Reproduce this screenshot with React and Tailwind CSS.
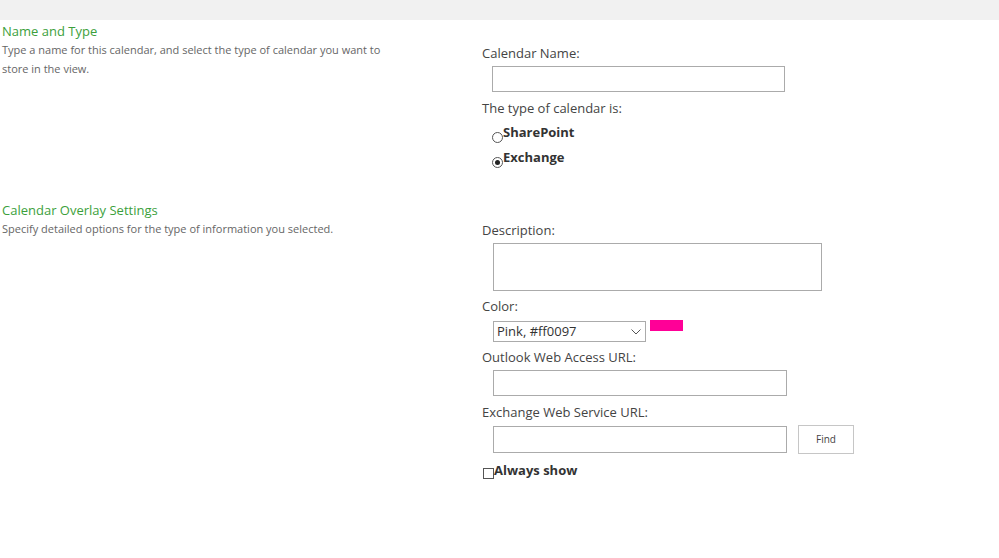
import React from "react";

const font = { fontFamily: '"Open Sans", "Noto Sans", sans-serif' };

function Label({ children, className = "" }) {
  return (
    <div className={"h-[20px] leading-[20px] text-[13px] text-[#444444] " + className}>
      {children}
    </div>
  );
}

function Input({ className = "" }) {
  return <div className={"border border-[#ababab] bg-white " + className} />;
}

function Radio({ checked, label, className = "" }) {
  return (
    <div className={"flex items-end h-[20px] " + className}>
      <span className="relative w-[11px] h-[11px] rounded-full border border-[#555] bg-white mb-[-1px] ml-[10px]">
        {checked && (
          <span className="absolute left-[2px] top-[2px] w-[5px] h-[5px] rounded-full bg-[#222]" />
        )}
      </span>
      <span className="text-[13px] font-bold text-[#333] leading-[20px]">{label}</span>
    </div>
  );
}

export default function App() {
  return (
    <div className="w-[999px] h-[558px] bg-white overflow-hidden" style={font}>
      <div className="h-[20px] bg-[#f1f1f1]" />

      {/* Section 1 */}
      <div className="flex h-[180px]">
        <div className="w-[482px] pl-[2px] pt-[1px]">
          <div className="h-[20px] leading-[20px] text-[13px] text-[#3c9f3c]">Name and Type</div>
          <div className="text-[11px] leading-[19px] text-[#666666] w-[390px] -mt-[1px]">
            Type a name for this calendar, and select the type of calendar you want to store in the view.
          </div>
        </div>
        <div className="flex-1 pt-[23px]">
          <Label>Calendar Name:</Label>
          <Input className="ml-[10px] mt-[3px] w-[293px] h-[26px]" />
          <Label className="mt-[6px]">The type of calendar is:</Label>
          <Radio className="mt-[4px]" label="SharePoint" />
          <Radio className="mt-[5px]" checked label="Exchange" />
        </div>
      </div>

      {/* Section 2 */}
      <div className="flex">
        <div className="w-[482px] pl-[2px]">
          <div className="h-[20px] leading-[20px] text-[13px] text-[#3c9f3c]">Calendar Overlay Settings</div>
          <div className="text-[11px] leading-[18px] text-[#666666]">
            Specify detailed options for the type of information you selected.
          </div>
        </div>
        <div className="flex-1 pt-[20px]">
          <Label>Description:</Label>
          <Input className="ml-[11px] mt-[3px] w-[329px] h-[48px]" />
          <Label className="mt-[5px]">Color:</Label>
          <div className="flex items-start mt-[5px]">
            <div className="ml-[11px] w-[153px] h-[21px] border border-[#ababab] flex items-center justify-between pl-[3px] pr-[4px]">
              <span className="text-[13px] text-[#333] leading-[19px]">Pink, #ff0097</span>
              <svg width="10" height="6" viewBox="0 0 10 6" className="mt-[1px]">
                <path d="M0.5 0.5 L5 5 L9.5 0.5" fill="none" stroke="#555" strokeWidth="1" />
              </svg>
            </div>
            <div className="ml-[4px] mt-[-1px] w-[33px] h-[11px] bg-[#ff0097]" />
          </div>
          <Label className="mt-[5px]">Outlook Web Access URL:</Label>
          <Input className="ml-[11px] mt-[3px] w-[294px] h-[26px]" />
          <Label className="mt-[6px]">Exchange Web Service URL:</Label>
          <div className="flex items-start mt-[3px]">
            <Input className="ml-[11px] mt-[1px] w-[294px] h-[27px]" />
            <div className="ml-[11px] w-[56px] h-[29px] border border-[#c6c6c6] bg-white flex items-center justify-center text-[10px] text-[#444]">
              Find
            </div>
          </div>
          <div className="flex items-end h-[20px] mt-[6px]">
            <span className="w-[11px] h-[11px] border border-[#555] bg-white mb-[1px] ml-[1px]" />
            <span className="text-[13px] font-bold text-[#333] leading-[20px]">Always show</span>
          </div>
        </div>
      </div>
    </div>
  );
}
